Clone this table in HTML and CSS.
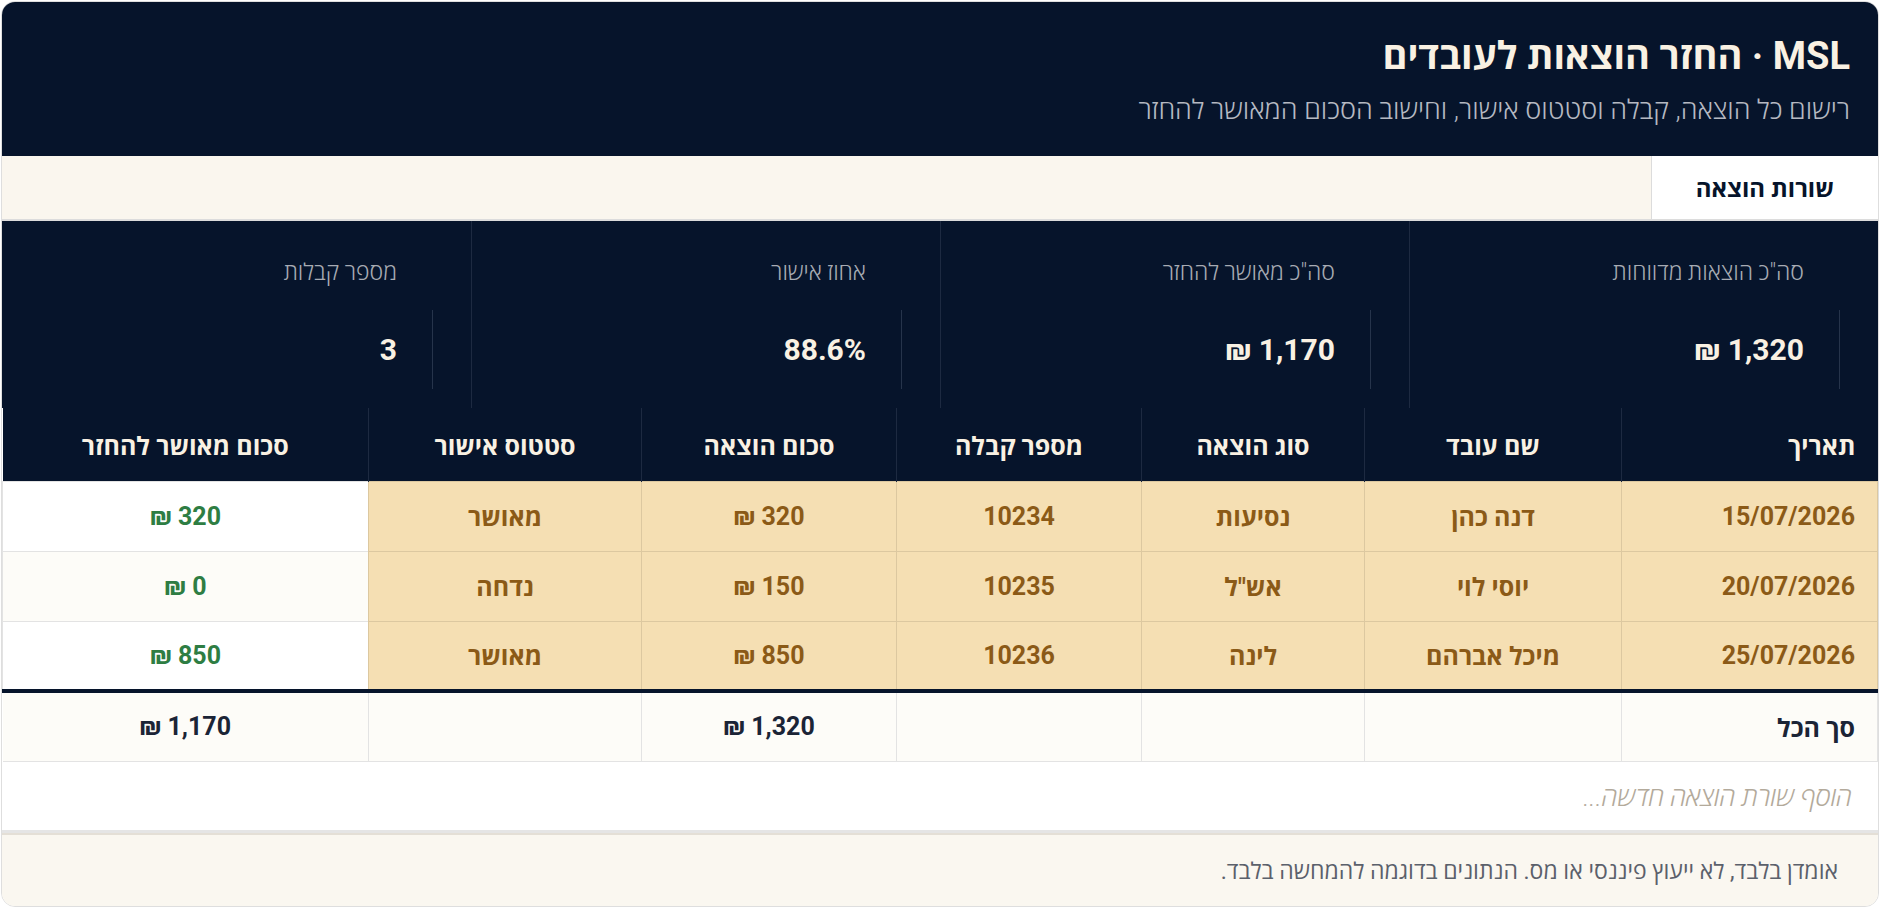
FILE: index.html
```html
<!DOCTYPE html>
<html lang="he" dir="rtl">
<head>
<meta charset="utf-8">
<title>MSL · החזר הוצאות לעובדים</title>
<link rel="stylesheet" href="styles.css">
</head>
<body>
<div class="card">
  <header class="hero">
    <h1 class="title">MSL · החזר הוצאות לעובדים</h1>
    <p class="subtitle">רישום כל הוצאה, קבלה וסטטוס אישור, וחישוב הסכום המאושר להחזר</p>
  </header>
  <nav class="tabs">
    <div class="tab active">שורות הוצאה</div>
  </nav>
  <section class="stats">
    <div class="stat">
      <div class="stat-label">סה"כ הוצאות מדווחות</div>
      <div class="stat-value">1,320 ₪</div>
    </div>
    <div class="stat">
      <div class="stat-label">סה"כ מאושר להחזר</div>
      <div class="stat-value">1,170 ₪</div>
    </div>
    <div class="stat">
      <div class="stat-label">אחוז אישור</div>
      <div class="stat-value">88.6%</div>
    </div>
    <div class="stat">
      <div class="stat-label">מספר קבלות</div>
      <div class="stat-value">3</div>
    </div>
  </section>
  <table class="grid">
    <colgroup>
      <col class="c-date"><col class="c-name"><col class="c-type"><col class="c-rcpt"><col class="c-amt"><col class="c-status"><col class="c-appr">
    </colgroup>
    <thead>
      <tr>
        <th class="first">תאריך</th>
        <th>שם עובד</th>
        <th>סוג הוצאה</th>
        <th>מספר קבלה</th>
        <th>סכום הוצאה</th>
        <th>סטטוס אישור</th>
        <th>סכום מאושר להחזר</th>
      </tr>
    </thead>
    <tbody>
      <tr>
        <td class="first">15/07/2026</td><td>דנה כהן</td><td>נסיעות</td><td>10234</td><td>320 ₪</td><td>מאושר</td><td class="calc">320 ₪</td>
      </tr>
      <tr class="alt">
        <td class="first">20/07/2026</td><td>יוסי לוי</td><td>אש"ל</td><td>10235</td><td>150 ₪</td><td>נדחה</td><td class="calc">0 ₪</td>
      </tr>
      <tr>
        <td class="first">25/07/2026</td><td>מיכל אברהם</td><td>לינה</td><td>10236</td><td>850 ₪</td><td>מאושר</td><td class="calc">850 ₪</td>
      </tr>
    </tbody>
    <tfoot>
      <tr>
        <td class="first">סך הכל</td><td></td><td></td><td></td><td>1,320 ₪</td><td></td><td>1,170 ₪</td>
      </tr>
    </tfoot>
  </table>
  <div class="add-row">הוסף שורת הוצאה חדשה...</div>
  <footer class="note">אומדן בלבד, לא ייעוץ פיננסי או מס. הנתונים בדוגמה להמחשה בלבד.</footer>
</div>
</body>
</html>
```
FILE: styles.css
```css
* { box-sizing: border-box; }
html, body { margin: 0; padding: 0; }
body {
  padding: 1px;
  background: #ffffff;
  font-family: Roboto, "Open Sans", sans-serif;
  color: #1b2436;
}
.card {
  border: 1px solid #dedede;
  border-radius: 14px;
  overflow: hidden;
  background: #ffffff;
}
.hero {
  background: #06142b;
  padding: 32px 28px 30px;
}
.title {
  margin: 0;
  font-size: 38px;
  line-height: 44px;
  font-weight: 700;
  color: #f9f1e3;
}
.subtitle {
  margin: 16px 0 0;
  font-size: 27px;
  line-height: 32px;
  font-weight: 300;
  color: #b5b9c2;
}
.tabs {
  display: flex;
  height: 65px;
  background: #faf6ee;
  border-bottom: 2px solid #dcdcdc;
}
.tab {
  display: flex;
  align-items: center;
  padding: 0 44px;
  font-size: 24px;
  font-weight: 700;
  color: #06142b;
}
.tab.active {
  background: #ffffff;
  border-left: 1px solid #dcdcdc;
}
.stats {
  display: grid;
  grid-template-columns: repeat(4, 1fr);
  background: #06142b;
}
.stat {
  padding: 37px 38px 19px;
  border-left: 1px solid #1d2a41;
}
.stat:last-child { border-left: none; }
.stat-label {
  padding-right: 36px;
  font-size: 23px;
  line-height: 30px;
  font-weight: 300;
  color: #a7abb3;
}
.stat-value {
  margin-top: 22px;
  height: 79px;
  display: flex;
  align-items: center;
  padding-right: 35px;
  border-right: 1px solid #26344b;
  font-size: 30px;
  font-weight: 700;
  color: #f9f1e3;
}
.grid {
  width: 100%;
  table-layout: fixed;
  border-collapse: collapse;
}
.c-date { width: 256px; }
.c-name { width: 257px; }
.c-type { width: 223px; }
.c-rcpt { width: 245px; }
.c-amt { width: 255px; }
.c-status { width: 273px; }
.c-appr { width: auto; }
.grid th {
  height: 73px;
  padding: 2px 12px 0;
  background: #06142b;
  color: #f9f1e3;
  font-size: 25px;
  font-weight: 700;
  text-align: center;
  border-left: 1px solid #1d2a41;
}
.grid th:last-child { border-left: none; }
.grid td {
  height: 70px;
  padding: 0 12px;
  text-align: center;
  font-size: 25px;
  font-weight: 700;
}
.grid .first { text-align: right; padding-right: 22px; }
.grid tbody td {
  background: #f5dfb3;
  color: #8b5a17;
  border: 1px solid #dcc8a0;
}
.grid tbody td.calc {
  background: #ffffff;
  color: #2e7d43;
  border: 1px solid #e3e3e3;
}
.grid tbody tr.alt td.calc { background: #fdfcf8; }
.grid tfoot td {
  height: 70px;
  background: #fdfcf8;
  color: #1b2436;
  border: 1px solid #e3e3e3;
  border-top: 4px solid #06142b;
}
.grid td:last-child { border-left: none; }
.add-row {
  height: 71px;
  display: flex;
  align-items: center;
  padding-right: 26px;
  font-size: 26px;
  font-style: italic;
  font-weight: 300;
  color: #b3aa9b;
  border-bottom: 3px solid #e5e5e5;
}
.note {
  height: 73px;
  display: flex;
  align-items: center;
  padding-right: 40px;
  background: #faf7f0;
  border-top: 2px solid #e4dfd6;
  font-size: 23px;
  color: #5b606b;
}
```
